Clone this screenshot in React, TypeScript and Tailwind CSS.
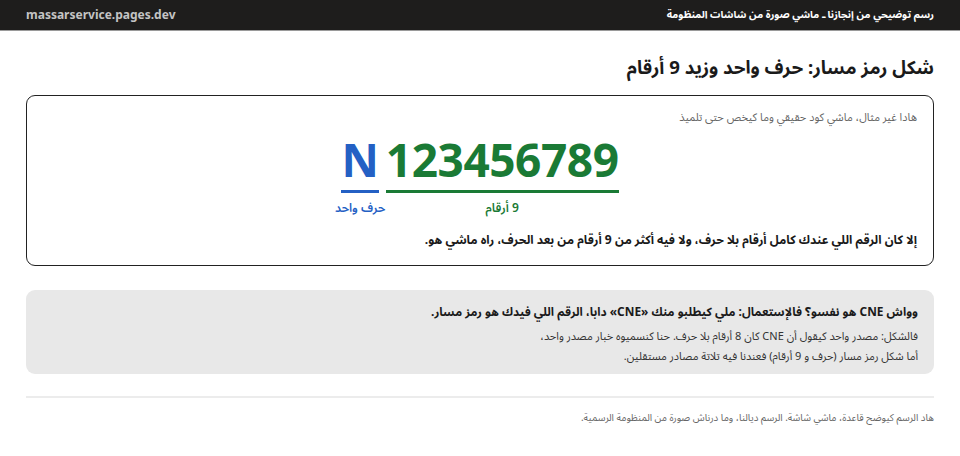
export default function App() {
  return (
    <div dir="rtl" className="min-h-screen bg-white text-[#1a1a1a]" style={{ fontFamily: '"Noto Sans", "Noto Sans Arabic", sans-serif' }}>
      <div className="h-[31px] bg-[#1e1d1c] border-b border-[#9a9a9a] px-[26px] flex items-center justify-between">
        <span className="text-[10.2px] font-bold text-white">رسم توضيحي من إنجازنا ـ ماشي صورة من شاشات المنظومة</span>
        <span dir="ltr" className="text-[12px] font-bold text-[#c4c4c4]">massarservice.pages.dev</span>
      </div>

      <div className="px-[26px]">
        <h1 className="mt-[20px] text-[18.6px] font-bold leading-[32px]">شكل رمز مسار: حرف واحد وزيد 9 أرقام</h1>

        <div className="mt-[12px] border border-[#222] rounded-[9px] px-[16px] pt-[12px] pb-[14px]">
          <p className="text-[11px] text-[#666] leading-[18px]">هادا غير مثال، ماشي كود حقيقي وما كيخص حتى تلميذ</p>
          <div dir="ltr" className="mt-[7px] flex justify-center gap-[7px]">
            <div className="flex flex-col items-center">
              <span className="text-[46px] font-bold leading-[52px] text-[#2460c4]">N</span>
              <div className="mt-[5px] h-[3px] w-full bg-[#2460c4]"></div>
              <div className="mt-[6px] w-0 flex justify-center">
                <span dir="rtl" className="whitespace-nowrap text-[12px] font-semibold text-[#2460c4] leading-[18px]">حرف واحد</span>
              </div>
            </div>
            <div className="flex flex-col items-center">
              <span className="text-[46px] font-bold leading-[52px] tracking-[-0.45px] text-[#1a7a35]">123456789</span>
              <div className="mt-[5px] h-[3px] w-full bg-[#1a7a35]"></div>
              <div className="mt-[6px] w-0 flex justify-center">
                <span dir="rtl" className="whitespace-nowrap text-[12px] font-semibold text-[#1a7a35] leading-[18px]">9 أرقام</span>
              </div>
            </div>
          </div>
          <p className="mt-[12px] text-[12.1px] font-bold leading-[22px]">إلا كان الرقم اللي عندك كامل أرقام بلا حرف، ولا فيه أكثر من 9 أرقام من بعد الحرف، راه ماشي هو.</p>
        </div>

        <div className="mt-[24px] bg-[#e8e8e8] rounded-[9px] px-[16px] pt-[10px] pb-[8px]">
          <p className="text-[11.9px] font-bold leading-[22px]">وواش CNE هو نفسو؟ فالإستعمال: ملي كيطلبو منك «CNE» دابا، الرقم اللي فيدك هو رمز مسار.</p>
          <p className="mt-[4px] text-[11px] text-[#333] leading-[20px]">فالشكل: مصدر واحد كيقول أن CNE كان 8 أرقام بلا حرف. حنا كنسميوه خبار مصدر واحد،<br />أما شكل رمز مسار (حرف و 9 أرقام) فعندنا فيه تلاتة مصادر مستقلين.</p>
        </div>

        <div className="mt-[22px] h-[2px] bg-[#ececec]"></div>
        <p className="mt-[10px] text-[9.85px] text-[#666] leading-[18px]">هاد الرسم كيوضح قاعدة، ماشي شاشة. الرسم ديالنا، وما درناش صورة من المنظومة الرسمية.</p>
      </div>
    </div>
  );
}
